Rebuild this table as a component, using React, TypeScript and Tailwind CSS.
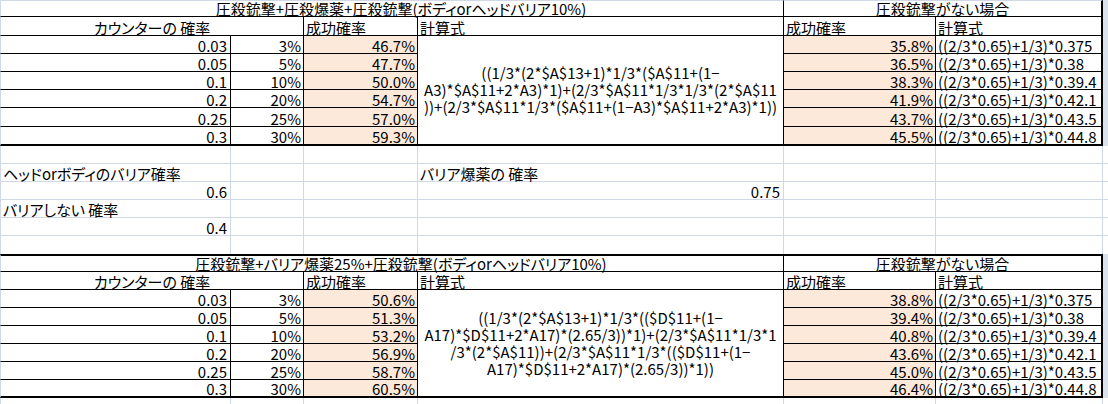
import React from "react";

const GRID = "grid grid-cols-[231px_73px_114px_366px_152px_167px_5px]";
const base = "flex items-end whitespace-nowrap leading-[15px]";
const PEACH = "bg-[#fde9d9]";

type Row = { a: string; b: string; c: string; e: string; f: string };

function Table({
  title,
  topCls,
  rowsCls,
  rows,
  formula,
}: {
  title: string;
  topCls: string;
  rowsCls: string;
  rows: Row[];
  formula: string[];
}) {
  return (
    <div className={`${GRID} ${rowsCls}`}>
      <div className={`${base} col-span-4 justify-center border-l border-l-[#d0d7e5] border-b border-r border-b-black border-r-black ${topCls}`}>
        <span className="pl-[18px]">{title}</span>
      </div>
      <div className={`${base} col-span-2 justify-center border-b border-b-black border-r-2 border-r-black ${topCls}`}>
        圧殺銃撃がない場合
      </div>
      <div className="row-span-8 bg-[#dce2ec]" />
      <div className={`${base} col-span-2 justify-center border-l border-l-[#d0d7e5] border-b border-r border-black`}>
        カウンターの 確率
      </div>
      <div className={`${base} pl-[2px] border-b border-r border-black`}>成功確率</div>
      <div className={`${base} pl-[2px] border-b border-r border-black`}>計算式</div>
      <div className={`${base} pl-[2px] border-b border-r border-black`}>成功確率</div>
      <div className={`${base} pl-[2px] border-b border-r-2 border-black`}>計算式</div>
      {rows.map((r, i) => {
        const last = i === rows.length - 1;
        const bb = last ? "border-b-2" : "border-b";
        return (
          <React.Fragment key={i}>
            <div className={`${base} justify-end pr-[3px] border-l border-l-[#d0d7e5] ${bb} border-r border-b-black border-r-black`}>
              {r.a}
            </div>
            <div className={`${base} justify-end pr-[2px] ${bb} border-r border-black`}>{r.b}</div>
            <div className={`${base} ${PEACH} justify-end pr-[2px] ${bb} border-r border-black`}>{r.c}</div>
            {i === 0 && (
              <div className="row-span-6 flex flex-col items-center justify-center whitespace-nowrap text-center leading-[17px] border-r border-b-2 border-black pb-[1px]">
                {formula.map((l, k) => (
                  <span key={k}>{l}</span>
                ))}
              </div>
            )}
            <div className={`${base} ${PEACH} justify-end pr-[2px] ${bb} border-r border-black`}>{r.e}</div>
            <div className={`${base} pl-[2px] ${bb} border-r-2 border-black`}>{r.f}</div>
          </React.Fragment>
        );
      })}
    </div>
  );
}

const fx = (v: string) => `((2/3*0.65)+1/3)*${v}`;
const fvals = ["0.375", "0.38", "0.39.4", "0.42.1", "0.43.5", "0.44.8"];
const as = ["0.03", "0.05", "0.1", "0.2", "0.25", "0.3"];
const bs = ["3%", "5%", "10%", "20%", "25%", "30%"];

const rows1: Row[] = ["46.7%", "47.7%", "50.0%", "54.7%", "57.0%", "59.3%"].map((c, i) => ({
  a: as[i],
  b: bs[i],
  c,
  e: ["35.8%", "36.5%", "38.3%", "41.9%", "43.7%", "45.5%"][i],
  f: fx(fvals[i]),
}));

const rows3: Row[] = ["50.6%", "51.3%", "53.2%", "56.9%", "58.7%", "60.5%"].map((c, i) => ({
  a: as[i],
  b: bs[i],
  c,
  e: ["38.8%", "39.4%", "40.8%", "43.6%", "45.0%", "46.4%"][i],
  f: fx(fvals[i]),
}));

const G = "border-[#d0d7e5]";

function MidRow({ cells, last }: { cells: (React.ReactNode | null)[]; last?: boolean }) {
  const bb = last ? "" : "border-b";
  return (
    <>
      {cells.map((c, i) => (
        <div
          key={i}
          className={`${base} ${bb} ${i < 6 ? "border-r" : ""} ${i === 0 ? "border-l" : ""} ${G}`}
        >
          {c}
        </div>
      ))}
    </>
  );
}

export default function App() {
  const L = (t: string) => <span className="pl-[2px]">{t}</span>;
  const R = (t: string) => <span className="ml-auto pr-[3px]">{t}</span>;
  return (
    <div className="w-[1108px] h-[404px] overflow-hidden bg-white text-black text-[15px] [font-feature-settings:'palt'] font-['Noto_Sans_CJK_JP',sans-serif]">
      <Table
        title="圧殺銃撃+圧殺爆薬+圧殺銃撃(ボディorヘッドバリア10%)"
        topCls="border-t border-t-[#d0d7e5]"
        rowsCls="grid-rows-[17px_19px_18px_18px_18px_18px_19px_19px]"
        rows={rows1}
        formula={[
          "((1/3*(2*$A$13+1)*1/3*($A$11+(1−",
          "A3)*$A$11+2*A3)*1)+(2/3*$A$11*1/3*1/3*(2*$A$11",
          "))+(2/3*$A$11*1/3*($A$11+(1−A3)*$A$11+2*A3)*1))",
        ]}
      />
      <div className={`${GRID} grid-rows-[18px_18px_18px_18px_18px_18px]`}>
        <MidRow cells={[null, null, null, null, null, null, null]} />
        <MidRow cells={[L("ヘッドorボディのバリア確率"), null, null, L("バリア爆薬の 確率"), null, null, null]} />
        <MidRow cells={[R("0.6"), null, null, R("0.75"), null, null, null]} />
        <MidRow cells={[L("バリアしない 確率"), null, null, null, null, null, null]} />
        <MidRow cells={[R("0.4"), null, null, null, null, null, null]} />
        <MidRow cells={[null, null, null, null, null, null, null]} last />
      </div>
      <Table
        title="圧殺銃撃+バリア爆薬25%+圧殺銃撃(ボディorヘッドバリア10%)"
        topCls="border-t-2 border-t-black"
        rowsCls="grid-rows-[18px_18px_18px_18px_18px_18px_18px_18px]"
        rows={rows3}
        formula={[
          "((1/3*(2*$A$13+1)*1/3*(($D$11+(1−",
          "A17)*$D$11+2*A17)*(2.65/3))*1)+(2/3*$A$11*1/3*1",
          "/3*(2*$A$11))+(2/3*$A$11*1/3*(($D$11+(1−",
          "A17)*$D$11+2*A17)*(2.65/3))*1))",
        ]}
      />
      <div className={`${GRID} grid-rows-[6px]`}>
        <MidRow cells={[null, null, null, null, null, null, null]} last />
      </div>
    </div>
  );
}
